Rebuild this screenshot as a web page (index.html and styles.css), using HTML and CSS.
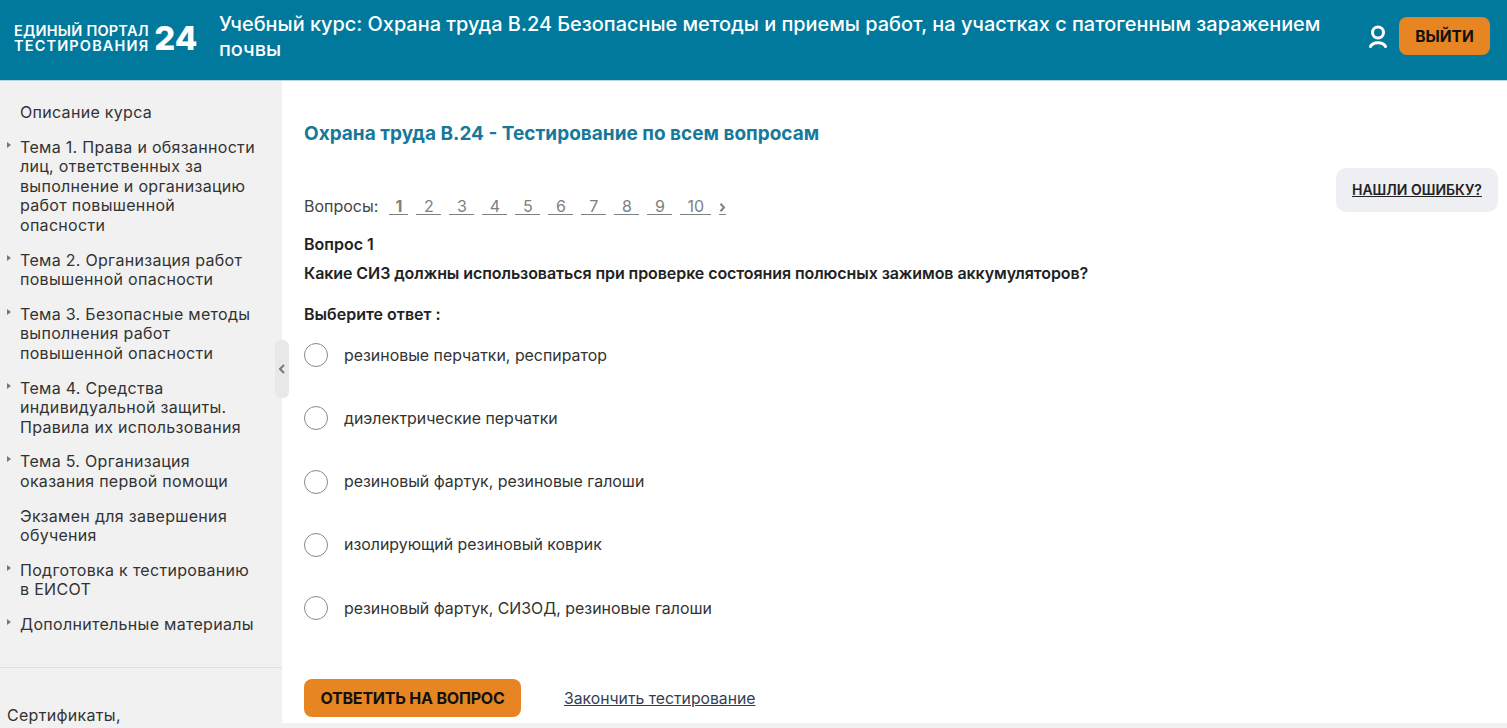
FILE: index.html
```html
<!DOCTYPE html>
<html lang="ru">
<head>
  <meta charset="UTF-8">
  <title>Охрана труда В.24</title>
  <link rel="stylesheet" href="styles.css">
</head>
<body>
  <header class="topbar">
    <a class="logo" href="#">
      <span class="logo-text">
        <span class="logo-line">ЕДИНЫЙ ПОРТАЛ</span>
        <span class="logo-line logo-line-wide">ТЕСТИРОВАНИЯ</span>
      </span>
      <span class="logo-num">24</span>
    </a>
    <div class="course-title">Учебный курс: Охрана труда В.24 Безопасные методы и приемы работ, на участках с патогенным заражением почвы</div>
    <svg class="user-icon" width="18" height="23" viewBox="0 0 18 23" fill="none" stroke="#fff" stroke-width="3">
      <circle cx="9" cy="7.5" r="5.5"/>
      <path d="M1.5 21.5 C4 16.5 14 16.5 16.5 21.5" stroke-linecap="round"/>
    </svg>
    <button class="logout">ВЫЙТИ</button>
  </header>

  <div class="layout">
    <aside class="sidebar">
      <ul class="menu">
        <li class="plain">Описание курса</li>
        <li>Тема 1. Права и обязанности лиц, ответственных за выполнение и организацию работ повышенной опасности</li>
        <li>Тема 2. Организация работ повышенной опасности</li>
        <li>Тема 3. Безопасные методы выполнения работ повышенной опасности</li>
        <li>Тема 4. Средства индивидуальной защиты. Правила их использования</li>
        <li>Тема 5. Организация оказания первой помощи</li>
        <li class="plain">Экзамен для завершения обучения</li>
        <li>Подготовка к тестированию в ЕИСОТ</li>
        <li>Дополнительные материалы</li>
      </ul>
      <div class="side-extra">Сертификаты,</div>
      <div class="collapse">
        <svg width="8" height="10" viewBox="0 0 8 10" fill="none" stroke="#777" stroke-width="2"><path d="M6 1 L2 5 L6 9"/></svg>
      </div>
    </aside>

    <main class="content">
      <h1 class="test-title">Охрана труда В.24 - Тестирование по всем вопросам</h1>
      <a class="report" href="#">НАШЛИ ОШИБКУ?</a>

      <nav class="pager">
        <span class="pager-label">Вопросы:</span>
        <a class="current" href="#">1</a>
        <a href="#">2</a>
        <a href="#">3</a>
        <a href="#">4</a>
        <a href="#">5</a>
        <a href="#">6</a>
        <a href="#">7</a>
        <a href="#">8</a>
        <a href="#">9</a>
        <a href="#">10</a>
        <a class="next" href="#">
          <svg width="7" height="9" viewBox="0 0 7 9" fill="none" stroke="#808080" stroke-width="2"><path d="M1.5 0.8 L5 4.5 L1.5 8.2"/></svg>
        </a>
      </nav>

      <div class="q-num">Вопрос 1</div>
      <div class="q-text">Какие СИЗ должны использоваться при проверке состояния полюсных зажимов аккумуляторов?</div>
      <div class="q-hint">Выберите ответ :</div>

      <div class="answers">
        <label class="answer"><span class="radio"></span>резиновые перчатки, респиратор</label>
        <label class="answer"><span class="radio"></span>диэлектрические перчатки</label>
        <label class="answer"><span class="radio"></span>резиновый фартук, резиновые галоши</label>
        <label class="answer"><span class="radio"></span>изолирующий резиновый коврик</label>
        <label class="answer"><span class="radio"></span>резиновый фартук, СИЗОД, резиновые галоши</label>
      </div>

      <div class="actions">
        <button class="submit">ОТВЕТИТЬ НА ВОПРОС</button>
        <a class="finish" href="#">Закончить тестирование</a>
      </div>
    </main>
  </div>
</body>
</html>
```

FILE: styles.css
```css
* {
  margin: 0;
  padding: 0;
  box-sizing: border-box;
}

html, body {
  height: 728px;
  overflow: hidden;
}

body {
  background: #f1f1f1;
  font-family: 'Inter', 'Noto Sans', sans-serif;
  color: #222;
}

a {
  color: inherit;
}

.topbar {
  height: 81px;
  background: #00799c;
  border-bottom: 1px solid #b9d5de;
  display: flex;
  align-items: center;
  padding: 0 17px 8px 14px;
  color: #fff;
}

.logo {
  display: flex;
  align-items: center;
  margin-top: 4px;
  color: #fff;
  text-decoration: none;
  width: 205px;
  flex: none;
}

.logo-line {
  display: block;
  font-size: 14.5px;
  font-weight: 600;
  line-height: 15px;
  letter-spacing: 0.23px;
  white-space: nowrap;
}

.logo-line-wide {
  letter-spacing: 1.15px;
}

.logo-num {
  font-size: 33px;
  font-weight: 800;
  line-height: 36px;
  margin-left: 5px;
}

.course-title {
  flex: 1;
  margin-top: 1px;
  font-size: 19.9px;
  font-weight: 500;
  line-height: 25px;
  padding-right: 30px;
}

.user-icon {
  flex: none;
  margin: 0 12px 0 0;
}

.logout {
  flex: none;
  width: 91px;
  height: 38px;
  border: none;
  border-radius: 8px;
  background: #e88523;
  color: #111;
  font: 700 15.5px 'Inter', sans-serif;
}

.layout {
  display: flex;
  height: 642px;
  background: #fff;
}

.sidebar {
  position: relative;
  flex: none;
  width: 282px;
  background: #f1f1f1;
  padding-top: 22px;
}

.menu {
  list-style: none;
  height: 565px;
  border-bottom: 1px solid #dedede;
}

.menu li {
  position: relative;
  margin: 0 22px 15.25px 20px;
  font-size: 16px;
  line-height: 19.5px;
  letter-spacing: 0.3px;
  color: #333;
}

.menu li:before {
  content: "";
  position: absolute;
  left: -13px;
  top: 4px;
  border-left: 4px solid #777;
  border-top: 3px solid transparent;
  border-bottom: 3px solid transparent;
}

.menu li.plain:before {
  display: none;
}

.side-extra {
  margin: 37px 0 0 7px;
  font-size: 16px;
  letter-spacing: 0.3px;
  color: #333;
}

.collapse {
  position: absolute;
  left: 275px;
  top: 259px;
  width: 14px;
  height: 58px;
  background: #e8e8e8;
  border-radius: 6px;
  display: flex;
  align-items: center;
  justify-content: center;
}

.content {
  position: relative;
  flex: 1;
  padding: 42px 0 0 22px;
}

.test-title {
  font-size: 19px;
  font-weight: 700;
  line-height: 22px;
  color: #16799a;
}

.report {
  position: absolute;
  right: 9px;
  top: 87px;
  width: 162px;
  height: 44px;
  padding-bottom: 2px;
  background: #eeeff3;
  border-radius: 10px;
  display: flex;
  align-items: center;
  justify-content: center;
  font-size: 14px;
  font-weight: 600;
  color: #222;
}

.pager {
  display: flex;
  align-items: baseline;
  margin-top: 54px;
  font-size: 16px;
  line-height: 15px;
  color: #808080;
}

.pager-label {
  color: #444;
  margin-right: 11px;
}

.pager a {
  min-width: 25px;
  padding: 0 7px;
  margin-right: 8px;
  text-align: center;
  border-bottom: 1px solid #808080;
  text-decoration: none;
}

.pager a.current {
  min-width: 19px;
  padding: 0;
  font-weight: 700;
}

.pager a.next {
  min-width: 0;
  padding: 0;
  margin-right: 0;
}

.q-num {
  margin-top: 19px;
  font-size: 16px;
  font-weight: 600;
  line-height: 20px;
}

.q-text {
  margin-top: 9px;
  font-size: 16px;
  font-weight: 600;
  line-height: 20px;
  letter-spacing: -0.08px;
}

.q-hint {
  margin-top: 21px;
  font-size: 16px;
  font-weight: 600;
  line-height: 20px;
}

.answers {
  margin-top: 19px;
}

.answer {
  display: flex;
  align-items: center;
  height: 24px;
  margin-bottom: 39.3px;
  font-size: 15.9px;
  color: #333;
}

.radio {
  flex: none;
  width: 24px;
  height: 24px;
  margin-right: 16px;
  background: #fff;
  border: 1px solid #888;
  border-radius: 50%;
}

.actions {
  display: flex;
  align-items: center;
  margin-top: 59px;
}

.submit {
  width: 217px;
  height: 38px;
  border: none;
  border-radius: 8px;
  background: #e88523;
  color: #111;
  font: 700 16px 'Inter', sans-serif;
  letter-spacing: -0.2px;
}

.finish {
  margin-left: 43px;
  font-size: 15.75px;
  color: #333d55;
}
```
